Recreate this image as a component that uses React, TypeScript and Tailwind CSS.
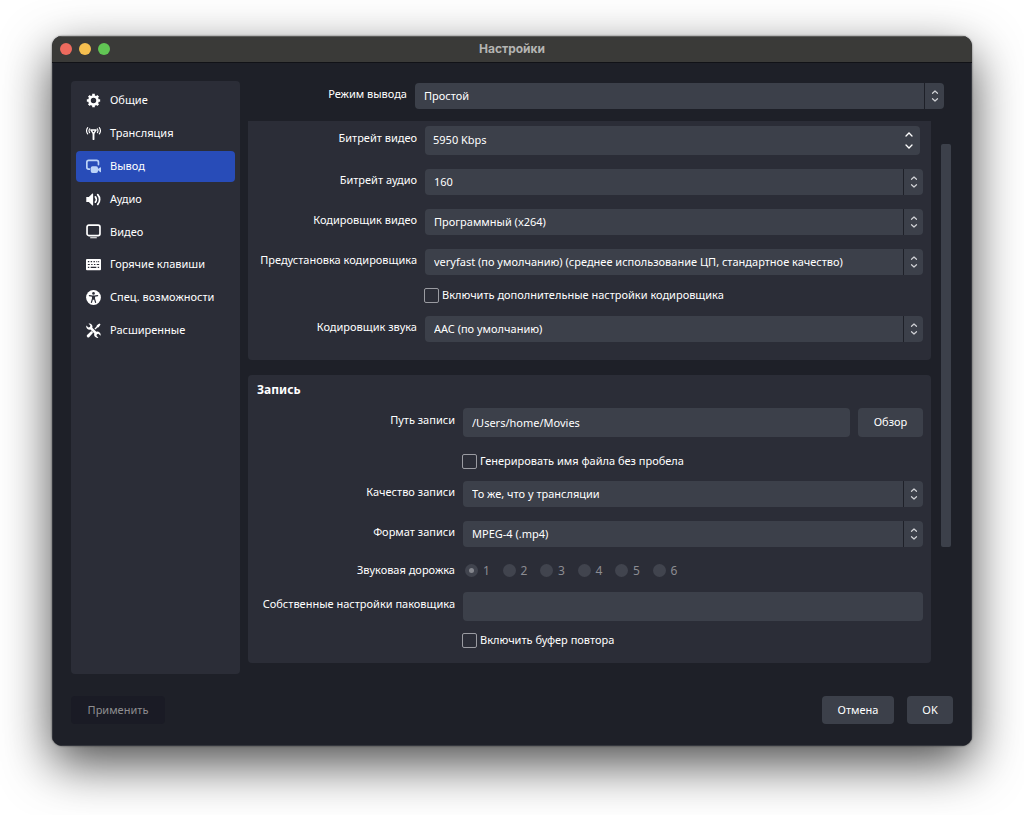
import React, { useState } from 'react';

type IconProps = { className?: string };

const GearIcon: React.FC<IconProps> = ({ className }) => (
  <svg viewBox="0 0 16 16" className={className} fill="none" stroke="currentColor">
    <circle cx="8" cy="8" r="4.300" strokeWidth="2.800" />
    <path
      d="M8 .9v2.400M8 12.700v2.400M.9 8h2.400M12.700 8h2.400M3 3l1.700 1.700M11.300 11.300L13 13M13 3l-1.700 1.700M4.700 11.300L3 13"
      strokeWidth="2.800"
    />
  </svg>
);

const BroadcastIcon: React.FC<IconProps> = ({ className }) => (
  <svg viewBox="0 0 16 16" className={className} fill="none" stroke="currentColor" strokeWidth="1.200" strokeLinecap="round">
    <path d="M1.800 1.800C.2 4 .2 6.200 1.800 8.400M3.900 3C3 4.400 3 5.800 3.900 7.200M14.200 1.800c1.600 2.200 1.600 4.400 0 6.600M12.100 3c.9 1.400.9 2.800 0 4.200" />
    <path d="M5.200 4.200h5.600L8 8.500z" strokeWidth="1.500" strokeLinejoin="round" />
    <path d="M8 8.500V14" strokeWidth="2" />
  </svg>
);

const OutputIcon: React.FC<IconProps> = ({ className }) => (
  <svg viewBox="0 0 16 16" className={className}>
    <path
      d="M3.600 10.800H2.900A2.100 2.100 0 0 1 .9 8.700V3.500a2.100 2.100 0 0 1 2-2.100h8.400a2.100 2.100 0 0 1 2 2.100v2.400"
      fill="none"
      stroke="currentColor"
      strokeWidth="1.800"
      strokeLinecap="round"
    />
    <rect x="5" y="7.800" width="7.800" height="7" rx="2" fill="currentColor" />
    <path d="M12 11.300l3.300-2.400q.7-.3.700.4v4.400q0 .7-.7.400z" fill="currentColor" />
  </svg>
);

const AudioIcon: React.FC<IconProps> = ({ className }) => (
  <svg viewBox="0 0 16 16" className={className}>
    <path d="M.3 5.300h2.700L6.800 1.700q.8-.5.800.4v11.800q0 .9-.8.400L3 10.700H.3z" fill="currentColor" />
    <path
      d="M10 5.200c1.300 1.500 1.300 4.100 0 5.600M12.500 2.800c2.700 2.900 2.700 7.500 0 10.400"
      fill="none"
      stroke="currentColor"
      strokeWidth="1.900"
      strokeLinecap="round"
    />
  </svg>
);

const MonitorIcon: React.FC<IconProps> = ({ className }) => (
  <svg viewBox="0 0 16 16" className={className} fill="none" stroke="currentColor">
    <rect x="1.100" y="1.100" width="13.800" height="11.200" rx="2" strokeWidth="1.800" />
    <path d="M4.500 14.700h7" strokeWidth="1.200" />
  </svg>
);

const KeyboardIcon: React.FC<IconProps> = ({ className }) => (
  <svg viewBox="0 0 16 16" className={className}>
    <rect x="0" y="2" width="16" height="12" rx="1" fill="currentColor" />
    <path
      d="M2 5h1.500M5 5h1.500M8 5h1.500M11 5h1M13 5h1M2 8h2M5.500 8h1.500M8.500 8h1.500M11.500 8h2.500M2 11h1.500M5 11h6M12.500 11h1.500"
      stroke="#2b2d37"
      strokeWidth="1.300"
    />
  </svg>
);

const AccessibilityIcon: React.FC<IconProps> = ({ className }) => (
  <svg viewBox="0 0 16 16" className={className}>
    <circle cx="8" cy="8" r="7.900" fill="currentColor" />
    <circle cx="8" cy="3.600" r="1.400" fill="#2b2d37" />
    <path
      d="M3.600 5.900L7 6.600v2.600L5.800 13.200M12.400 5.900L9 6.600v2.600l1.200 4M8 6.200v3.600"
      fill="none"
      stroke="#2b2d37"
      strokeWidth="1.300"
      strokeLinecap="round"
      strokeLinejoin="round"
    />
  </svg>
);

const ToolsIcon: React.FC<IconProps> = ({ className }) => (
  <svg viewBox="0 0 16 16" className={className} fill="currentColor">
    <path d="M2.700.5a3.500 3.500 0 0 1 4 4.500l4.300 4.300a3.500 3.500 0 0 1 4.500 4.200l-2.200-2-1.700.4-.4 1.700 2 2.100a3.500 3.500 0 0 1-4.300-4.500L4.700 7A3.500 3.500 0 0 1 .4 2.700l2.100 2 1.700-.4.500-1.700z" />
    <path d="M14.300.5l1.200 1.200-2 2.700-1.200.3-2.300 2.300-1-1 2.200-2.400.4-1.200z" />
    <path d="M5.700 8.400l1.900 1.900-4.300 4.800q-1 .8-2-.2t-.2-2z" />
  </svg>
);

const sections: Array<{ id: string; name: string; icon: React.ComponentType<IconProps> }> = [
  { id: 'general', name: 'Общие', icon: GearIcon },
  { id: 'stream', name: 'Трансляция', icon: BroadcastIcon },
  { id: 'output', name: 'Вывод', icon: OutputIcon },
  { id: 'audio', name: 'Аудио', icon: AudioIcon },
  { id: 'video', name: 'Видео', icon: MonitorIcon },
  { id: 'hotkeys', name: 'Горячие клавиши', icon: KeyboardIcon },
  { id: 'accessibility', name: 'Спец. возможности', icon: AccessibilityIcon },
  { id: 'advanced', name: 'Расширенные', icon: ToolsIcon },
];

const Chevrons: React.FC = () => (
  <svg viewBox="0 0 8 12" className="h-3 w-2" fill="none" stroke="#d0d1d5" strokeWidth="1.200" strokeLinecap="round" strokeLinejoin="round">
    <path d="M1.500 3.300L4 1l2.500 2.300M1.500 8.700L4 11l2.500-2.300" />
  </svg>
);

const Select: React.FC<{ id: string; value: string }> = ({ id, value }) => (
  <div className="relative min-w-0 flex-1">
    <select
      id={id}
      className="block h-[26px] w-full appearance-none rounded bg-[#3c404a] pt-px pr-6 pl-[9px] text-[11px] text-white outline-none"
    >
      <option>{value}</option>
    </select>
    <span className="pointer-events-none absolute inset-y-0 right-0 flex w-5 items-center justify-center border-l border-[#1e2028]">
      <Chevrons />
    </span>
  </div>
);

interface RowProps {
  label?: string;
  htmlFor?: string;
  labelWidth: string;
  className?: string;
  children: React.ReactNode;
}

const Row: React.FC<RowProps> = ({ label, htmlFor, labelWidth, className = '', children }) => (
  <div className={`flex items-center gap-2 ${className}`}>
    <label htmlFor={htmlFor} className={`shrink-0 pb-1 text-right whitespace-nowrap ${labelWidth}`}>
      {label}
    </label>
    {children}
  </div>
);

const Check: React.FC<{ children: React.ReactNode }> = ({ children }) => (
  <label className="-ml-px flex items-center gap-[3px] whitespace-nowrap">
    <input type="checkbox" className="size-[15px] appearance-none rounded-xs border border-[#9a9ba1] checked:bg-[#284cb8]" />
    {children}
  </label>
);

const STREAM_LABEL = 'w-[160px]';
const RECORD_LABEL = 'w-[198px]';

const StreamingGroup: React.FC = () => (
  <section className="flex flex-col gap-3.5 rounded-b bg-[#2b2d37] pt-[5px] pr-2 pb-[18px] pl-[9px]">
    <Row label="Битрейт видео" htmlFor="vbitrate" labelWidth={STREAM_LABEL}>
      <div className="mr-[3px] flex h-[29px] min-w-0 flex-1 rounded bg-[#3c404a]">
        <input id="vbitrate" defaultValue="5950 Kbps" className="min-w-0 flex-1 bg-transparent pl-2 outline-none" />
        <div className="flex w-[22px] flex-col items-center justify-center gap-[7px]">
          <button aria-label="Увеличить">
            <svg viewBox="0 0 8 5" className="block h-[5px] w-2" fill="none" stroke="white" strokeWidth="1.300" strokeLinecap="round">
              <path d="M1 4l3-3 3 3" />
            </svg>
          </button>
          <button aria-label="Уменьшить">
            <svg viewBox="0 0 8 5" className="block h-[5px] w-2" fill="none" stroke="white" strokeWidth="1.300" strokeLinecap="round">
              <path d="M1 1l3 3 3-3" />
            </svg>
          </button>
        </div>
      </div>
    </Row>
    <Row label="Битрейт аудио" htmlFor="abitrate" labelWidth={STREAM_LABEL}>
      <Select id="abitrate" value="160" />
    </Row>
    <Row label="Кодировщик видео" htmlFor="vencoder" labelWidth={STREAM_LABEL}>
      <Select id="vencoder" value="Программный (x264)" />
    </Row>
    <Row label="Предустановка кодировщика" htmlFor="preset" labelWidth={STREAM_LABEL}>
      <Select id="preset" value="veryfast (по умолчанию) (среднее использование ЦП, стандартное качество)" />
    </Row>
    <Row labelWidth={STREAM_LABEL} className="h-[13px]">
      <Check>Включить дополнительные настройки кодировщика</Check>
    </Row>
    <Row label="Кодировщик звука" htmlFor="aencoder" labelWidth={STREAM_LABEL}>
      <Select id="aencoder" value="AAC (по умолчанию)" />
    </Row>
  </section>
);

const RecordingGroup: React.FC = () => (
  <section className="rounded bg-[#2b2d37] pt-[6px] pr-2 pb-[18px] pl-[9px]">
    <h2 className="mb-[9px] text-xs leading-[18px] font-bold">Запись</h2>
    <div className="flex flex-col gap-3.5">
      <Row label="Путь записи" htmlFor="path" labelWidth={RECORD_LABEL}>
        <input
          id="path"
          defaultValue="/Users/home/Movies"
          className="h-[29px] min-w-0 flex-1 rounded bg-[#3c404a] pl-[9px] outline-none"
        />
        <button className="h-[29px] w-[65px] rounded bg-[#3c404a]">Обзор</button>
      </Row>
      <Row labelWidth={RECORD_LABEL} className="h-4 pt-[5px]">
        <Check>Генерировать имя файла без пробела</Check>
      </Row>
      <Row label="Качество записи" htmlFor="quality" labelWidth={RECORD_LABEL}>
        <Select id="quality" value="То же, что у трансляции" />
      </Row>
      <Row label="Формат записи" htmlFor="format" labelWidth={RECORD_LABEL}>
        <Select id="format" value="MPEG-4 (.mp4)" />
      </Row>
      <div className="flex h-[17px] items-center gap-2 pt-0.5">
        <span id="track" className="w-[198px] shrink-0 text-right whitespace-nowrap">
          Звуковая дорожка
        </span>
        <div role="radiogroup" aria-labelledby="track" className="grid w-[227px] grid-cols-6 pl-0.5 text-[#8b8c92]">
          {[1, 2, 3, 4, 5, 6].map((track) => (
            <label key={track} className="flex items-center gap-[5px] text-xs">
              <span className="grid place-items-center">
                <input
                  type="radio"
                  name="track"
                  disabled
                  defaultChecked={track === 1}
                  className="peer col-start-1 row-start-1 size-[13px] appearance-none rounded-full bg-[#41444e]"
                />
                <span className="col-start-1 row-start-1 hidden size-[5px] rounded-full bg-[#85878e] peer-checked:block" />
              </span>
              {track}
            </label>
          ))}
        </div>
      </div>
      <Row label="Собственные настройки паковщика" htmlFor="muxer" labelWidth={RECORD_LABEL}>
        <input id="muxer" className="h-[29px] min-w-0 flex-1 rounded bg-[#3c404a] pl-[9px] outline-none" />
      </Row>
      <Row labelWidth={RECORD_LABEL} className="h-[10px]">
        <Check>Включить буфер повтора</Check>
      </Row>
    </div>
  </section>
);

export default function App() {
  const [section, setSection] = useState('output');

  return (
    <div className="flex min-h-screen flex-col bg-white px-[52px] pt-9 pb-[69px] font-['Noto_Sans','Open_Sans',sans-serif] text-[11px] text-white">
      <div className="flex flex-1 flex-col overflow-hidden rounded-[10px] bg-[#1e2028] shadow-[0_0_2px_rgba(0,0,0,0.6),0_18px_50px_rgba(0,0,0,0.7)]">
        {/* Title bar */}
        <header className="grid h-[27px] grid-cols-[1fr_auto_1fr] items-center border-t border-b border-t-[#5c5c5a] border-b-[#111217] bg-[#3a3a38] px-2 pb-0.5">
          <div className="flex gap-[7px]">
            <button aria-label="Закрыть" className="size-3 rounded-full bg-[#ed6a5e]" />
            <button aria-label="Свернуть" className="size-3 rounded-full bg-[#f5bf4f]" />
            <button aria-label="Развернуть" className="size-3 rounded-full bg-[#61c554]" />
          </div>
          <h1 className="font-[Inter,sans-serif] text-xs leading-4 font-bold text-[#b4b4b2]">Настройки</h1>
        </header>

        <div className="flex flex-1 flex-col border-x border-b border-[#34363d] px-[18px] pt-[18px] pb-[21px]">
          <div className="flex flex-1 gap-2">
            {/* Sections */}
            <aside className="w-[169px] shrink-0 rounded bg-[#2b2d37] px-[5px] py-1">
              <nav className="flex h-[261px] flex-col justify-between">
                {sections.map((item) => {
                  const Icon = item.icon;
                  return (
                    <button
                      key={item.id}
                      onClick={() => setSection(item.id)}
                      className={`flex h-[31px] items-center gap-[9px] rounded pl-2.5 text-left ${
                        section === item.id ? 'bg-[#284cb8]' : ''
                      }`}
                    >
                      <Icon className={`size-[15px] shrink-0 ${item.id === 'output' ? 'text-[#bcd3f7]' : ''}`} />
                      {item.name}
                    </button>
                  );
                })}
              </nav>
            </aside>

            {/* Output settings */}
            <main className="flex min-w-0 flex-1 flex-col gap-3 pt-0.5">
              <Row label="Режим вывода" htmlFor="mode" labelWidth="w-[159px]" className="pr-[9px]">
                <Select id="mode" value="Простой" />
              </Row>
              <div className="flex gap-2.5 pr-0.5">
                <div className="flex min-w-0 flex-1 flex-col gap-[15px]">
                  <StreamingGroup />
                  <RecordingGroup />
                </div>
                <div className="mt-[23px] h-[403px] w-2.5 rounded-xs bg-[#3c404a]" />
              </div>
            </main>
          </div>

          {/* Footer */}
          <footer className="mt-[22px] flex gap-[13px]">
            <button disabled className="mr-auto h-7 w-[94px] rounded bg-[#1a1b25] text-[#8e8e90]">
              Применить
            </button>
            <button className="h-7 w-[72px] rounded bg-[#3c404a]">Отмена</button>
            <button className="h-7 w-[46px] rounded bg-[#3c404a]">OK</button>
          </footer>
        </div>
      </div>
    </div>
  );
}
